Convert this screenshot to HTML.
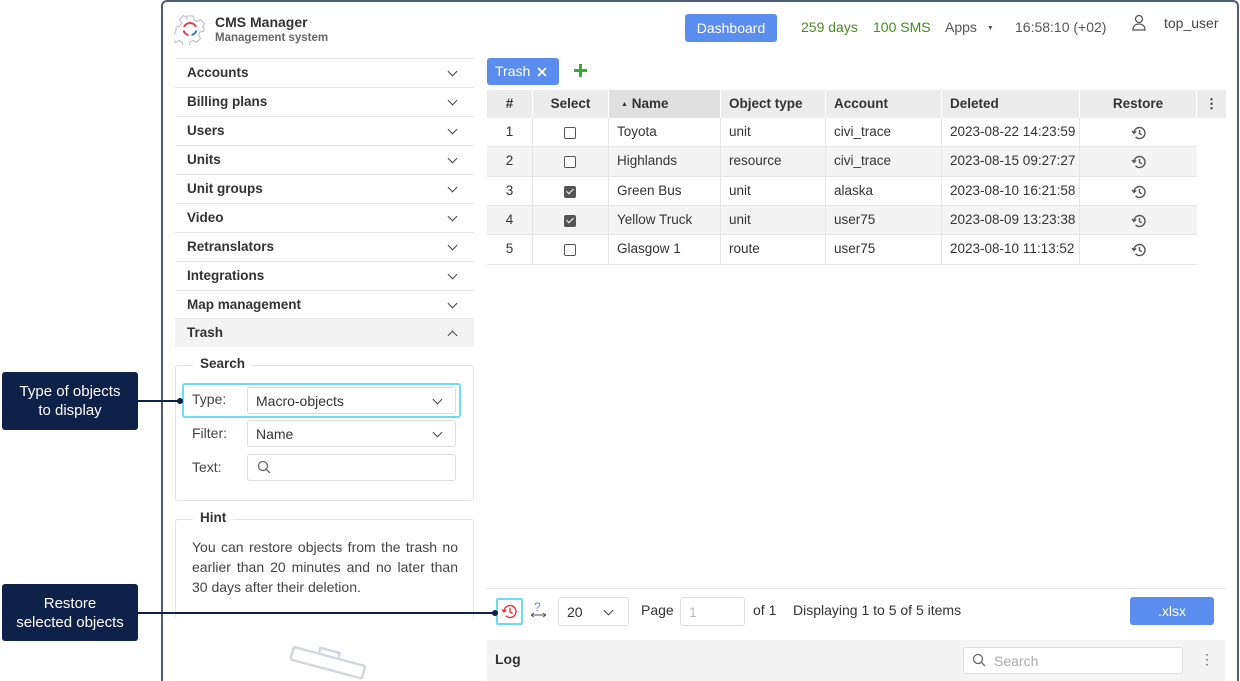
<!DOCTYPE html>
<html style="height:681px;overflow:hidden"><head><meta charset="utf-8"><style>
*{margin:0;padding:0;box-sizing:border-box}
body{width:1240px;height:681px;position:relative;overflow:hidden;background:#fff;font-family:"Liberation Sans",sans-serif;font-size:14px;color:#333}
.a{position:absolute;white-space:nowrap}
.frame{left:161px;top:0;width:1078px;height:681px;border:2px solid #4d5b73;border-bottom:none;border-radius:6px 6px 0 0}
.menu{left:175px;width:299px;height:29px;border-top:1px solid #e6e6e6;padding-left:12px;line-height:27px;font-weight:bold;font-size:13.5px;color:#333}
.chev{position:absolute;right:18px;top:9px;width:7px;height:7px;border-right:1.6px solid #444;border-bottom:1.6px solid #444;transform:rotate(45deg)}
.chevu{transform:rotate(-135deg);top:13px}
.fs{border:1px solid #e3e3e3;border-radius:3px}
.leg{background:#fff;padding:0 7px;font-weight:bold;font-size:13.5px}
.inp{border:1px solid #ddd;border-radius:3px;background:#fff}
.lbl{font-size:14px;color:#444}
.th{top:90px;height:28px;line-height:27px;background:#ececec;font-weight:bold;font-size:13.5px;border-right:1px solid #fff}
.cell{height:29px;line-height:28px;border-right:1px solid #e6e6e6;padding-left:8px;font-size:13.5px;white-space:nowrap;overflow:hidden}
.cb{width:12px;height:12px;border:1.5px solid #555;border-radius:2px;position:absolute;left:31px;top:9px}
.cbc{background:#555}
.cbc:after{content:"";position:absolute;left:3px;top:0px;width:3px;height:6px;border-right:1.5px solid #fff;border-bottom:1.5px solid #fff;transform:rotate(45deg)}
.callout{left:2px;width:136px;background:#0d2149;color:#fff;border-radius:3px;text-align:center;font-size:15px;line-height:19px}
.rs{display:block;margin:7px auto 0}
</style></head><body>
<div class="a frame"></div>

<svg class="a" style="left:174px;top:13px" width="32" height="32" viewBox="0 0 32 32">
<path d="M13 3h6l1 4 3 1.5 3.5-2 4 4-2 3.5L30 14v4l-4 1-1.5 3 2 3.5-4 4-3.5-2-3 1.5-1 4h-6l-1-4-3-1.5-3.5 2-4-4 2-3.5L2 18v-4l4-1 1.5-3-2-3.5 4-4 3.5 2L13 7z" fill="none" stroke="#bbb" stroke-width="1"/>
<path d="M10 14a6.5 6.5 0 0 1 12 0" fill="none" stroke="#e03c4b" stroke-width="2"/>
<path d="M22.5 17.5a6.5 6.5 0 0 1-5 4.5" fill="none" stroke="#3b6fd8" stroke-width="2"/>
<path d="M14.5 22a6.5 6.5 0 0 1-5-4.5" fill="none" stroke="#e03c4b" stroke-width="2"/>
</svg>
<div class="a" style="left:215px;top:14px;font-weight:bold;font-size:14px;color:#333">CMS Manager</div>
<div class="a" style="left:215px;top:32px;font-weight:bold;font-size:11.5px;color:#666">Management system</div>

<div class="a" style="left:685px;top:14px;width:92px;height:28px;background:#5b8def;border-radius:3px;color:#fff;text-align:center;line-height:28px;font-size:14px">Dashboard</div>
<div class="a" style="left:801px;top:19px;color:#4a8a2a;font-size:14px">259 days</div>
<div class="a" style="left:873px;top:19px;color:#3f8f1f;font-size:14px">100 SMS</div>
<div class="a" style="left:945px;top:19px;color:#555;font-size:14px">Apps <span style="font-size:7px;margin-left:6px;vertical-align:2px">▼</span></div>
<div class="a" style="left:1015px;top:19px;color:#555;font-size:14px">16:58:10 (+02)</div>
<svg class="a" style="left:1131px;top:14px" width="16" height="18" viewBox="0 0 16 18"><circle cx="8" cy="5" r="3.5" fill="none" stroke="#555" stroke-width="1.3"/><path d="M2 16c0-4 2.5-6 6-6s6 2 6 6z" fill="none" stroke="#555" stroke-width="1.3"/></svg>
<div class="a" style="left:1164px;top:15px;color:#444;font-size:14px">top_user</div>

<div class="a menu" style="top:58px">Accounts<i class="chev"></i></div>
<div class="a menu" style="top:87px">Billing plans<i class="chev"></i></div>
<div class="a menu" style="top:116px">Users<i class="chev"></i></div>
<div class="a menu" style="top:145px">Units<i class="chev"></i></div>
<div class="a menu" style="top:174px">Unit groups<i class="chev"></i></div>
<div class="a menu" style="top:203px">Video<i class="chev"></i></div>
<div class="a menu" style="top:232px">Retranslators<i class="chev"></i></div>
<div class="a menu" style="top:261px">Integrations<i class="chev"></i></div>
<div class="a menu" style="top:290px">Map management<i class="chev"></i></div>
<div class="a menu" style="top:318px;background:#f3f3f3">Trash<i class="chev chevu"></i></div>

<div class="a fs" style="left:175px;top:365px;width:299px;height:136px"></div>
<div class="a leg" style="left:193px;top:356px">Search</div>
<div class="a" style="left:182px;top:383px;width:279px;height:35px;border:2px solid #6fdcec;border-radius:3px"></div>
<div class="a lbl" style="left:192px;top:391px">Type:</div>
<div class="a inp" style="left:247px;top:387px;width:209px;height:27px;padding:5px 8px">Macro-objects<i class="chev" style="right:14px;top:8px"></i></div>
<div class="a lbl" style="left:192px;top:425px">Filter:</div>
<div class="a inp" style="left:247px;top:420px;width:209px;height:27px;padding:5px 8px">Name<i class="chev" style="right:14px;top:8px"></i></div>
<div class="a lbl" style="left:192px;top:459px">Text:</div>
<div class="a inp" style="left:247px;top:454px;width:209px;height:27px"></div>
<svg class="a" style="left:257px;top:460px" width="14" height="14" viewBox="0 0 14 14"><circle cx="6" cy="6" r="4.5" fill="none" stroke="#666" stroke-width="1.3"/><path d="M9.3 9.3L13 13" stroke="#666" stroke-width="1.3"/></svg>

<div class="a fs" style="left:175px;top:519px;width:299px;height:100px;border-bottom:none"></div>
<div class="a leg" style="left:193px;top:510px">Hint</div>
<div class="a" style="left:192px;top:537px;width:266px;font-size:14px;line-height:20px;color:#444;text-align:justify;white-space:normal">You can restore objects from the trash no earlier than 20 minutes and no later than 30 days after their deletion.</div>

<svg class="a" style="left:285px;top:642px" width="85" height="40" viewBox="0 0 85 40"><g transform="rotate(15 42 20)" fill="none" stroke="#d3d6df" stroke-width="2.5"><rect x="6" y="14" width="74" height="13" rx="2"/><path d="M32 14v-6h20v6"/></g></svg>

<div class="a" style="left:487px;top:58px;width:72px;height:27px;background:#5b8def;border-radius:3px;color:#fff;padding:5px 0 0 8px;font-size:14px">Trash</div>
<svg class="a" style="left:537px;top:67px" width="10" height="10" viewBox="0 0 10 10"><path d="M1 1l8 8M9 1l-8 8" stroke="#fff" stroke-width="1.8"/></svg>
<svg class="a" style="left:573px;top:63px" width="15" height="15" viewBox="0 0 15 15"><path d="M7.5 1v13M1 7.5h13" stroke="#3aaa35" stroke-width="3"/></svg>

<div class="a th" style="left:487px;width:46px;text-align:center">#</div>
<div class="a th" style="left:533px;width:76px;text-align:center">Select</div>
<div class="a th" style="left:609px;width:112px;background:#e0e0e0;padding-left:12px"><span style="font-size:7px;vertical-align:2px">▲</span> Name</div>
<div class="a th" style="left:721px;width:105px;padding-left:8px">Object type</div>
<div class="a th" style="left:826px;width:116px;padding-left:8px">Account</div>
<div class="a th" style="left:942px;width:138px;padding-left:8px">Deleted</div>
<div class="a th" style="left:1080px;width:117px;text-align:center">Restore</div>
<div class="a th" style="left:1197px;width:29px;text-align:center;border:none">⋮</div>

<svg width="0" height="0" style="position:absolute"><defs><g id="r"><path d="M3 8a5.5 5.5 0 1 1 1.6 3.9" fill="none" stroke="#555" stroke-width="1.4"/><path d="M1 6l2 2.4 2.2-2" fill="none" stroke="#555" stroke-width="1.4"/><path d="M8.5 5v3.5l2.3 1.3" fill="none" stroke="#555" stroke-width="1.4"/></g></defs></svg>

<div class="a" style="left:487px;top:118px;width:710px">
<div style="position:relative;height:29px;border-bottom:1px solid #e6e6e6;display:flex"><div class="cell" style="width:46px;padding:0;text-align:center">1</div><div class="cell" style="width:76px;position:relative"><i class="cb"></i></div><div class="cell" style="width:112px">Toyota</div><div class="cell" style="width:105px">unit</div><div class="cell" style="width:116px">civi_trace</div><div class="cell" style="width:138px">2023-08-22 14:23:59</div><div class="cell" style="width:117px;padding:0;border:none"><svg class="rs" width="16" height="15"><use href="#r"/></svg></div></div>
<div style="position:relative;height:30px;background:#f4f4f4;border-bottom:1px solid #e6e6e6;display:flex"><div class="cell" style="width:46px;padding:0;text-align:center">2</div><div class="cell" style="width:76px;position:relative"><i class="cb" style="background:#fff"></i></div><div class="cell" style="width:112px">Highlands</div><div class="cell" style="width:105px">resource</div><div class="cell" style="width:116px">civi_trace</div><div class="cell" style="width:138px">2023-08-15 09:27:27</div><div class="cell" style="width:117px;padding:0;border:none"><svg class="rs" width="16" height="15"><use href="#r"/></svg></div></div>
<div style="position:relative;height:29px;border-bottom:1px solid #e6e6e6;display:flex"><div class="cell" style="width:46px;padding:0;text-align:center">3</div><div class="cell" style="width:76px;position:relative"><i class="cb cbc"></i></div><div class="cell" style="width:112px">Green Bus</div><div class="cell" style="width:105px">unit</div><div class="cell" style="width:116px">alaska</div><div class="cell" style="width:138px">2023-08-10 16:21:58</div><div class="cell" style="width:117px;padding:0;border:none"><svg class="rs" width="16" height="15"><use href="#r"/></svg></div></div>
<div style="position:relative;height:29px;background:#f4f4f4;border-bottom:1px solid #e6e6e6;display:flex"><div class="cell" style="width:46px;padding:0;text-align:center">4</div><div class="cell" style="width:76px;position:relative"><i class="cb cbc"></i></div><div class="cell" style="width:112px">Yellow Truck</div><div class="cell" style="width:105px">unit</div><div class="cell" style="width:116px">user75</div><div class="cell" style="width:138px">2023-08-09 13:23:38</div><div class="cell" style="width:117px;padding:0;border:none"><svg class="rs" width="16" height="15"><use href="#r"/></svg></div></div>
<div style="position:relative;height:30px;border-bottom:1px solid #e6e6e6;display:flex"><div class="cell" style="width:46px;padding:0;text-align:center">5</div><div class="cell" style="width:76px;position:relative"><i class="cb"></i></div><div class="cell" style="width:112px">Glasgow 1</div><div class="cell" style="width:105px">route</div><div class="cell" style="width:116px">user75</div><div class="cell" style="width:138px">2023-08-10 11:13:52</div><div class="cell" style="width:117px;padding:0;border:none"><svg class="rs" width="16" height="15"><use href="#r"/></svg></div></div>
</div>

<div class="a" style="left:486px;top:588px;width:740px;border-top:1px solid #e6e6e6"></div>
<div class="a" style="left:496px;top:598px;width:27px;height:27px;border:2px solid #6fdcec;border-radius:2px"></div>
<svg class="a" style="left:501px;top:603px" width="17" height="17" viewBox="0 0 17 17"><path d="M3 8.5a6 6 0 1 1 1.8 4.3" fill="none" stroke="#e53935" stroke-width="1.4"/><path d="M1 6.5l2 2.5 2.3-2.2" fill="none" stroke="#e53935" stroke-width="1.4"/><path d="M9 5v4l2.5 1.5" fill="none" stroke="#e53935" stroke-width="1.4"/></svg>
<div class="a" style="left:534px;top:600px;font-size:12px;color:#5b8def">?</div>
<svg class="a" style="left:530px;top:612px" width="17" height="6" viewBox="0 0 17 6"><path d="M1 3h15M1 3l3-2M1 3l3 2M16 3l-3-2M16 3l-3 2" stroke="#555" stroke-width="1" fill="none"/></svg>
<div class="a inp" style="left:558px;top:597px;width:71px;height:29px;padding:6px 8px">20<i class="chev" style="right:16px;top:9px"></i></div>
<div class="a" style="left:641px;top:602px">Page</div>
<div class="a inp" style="left:680px;top:597px;width:65px;height:29px;padding:6px 8px;color:#bbb">1</div>
<div class="a" style="left:753px;top:602px">of 1</div>
<div class="a" style="left:793px;top:602px">Displaying 1 to 5 of 5 items</div>
<div class="a" style="left:1130px;top:597px;width:84px;height:28px;background:#5b8def;border-radius:3px;color:#fff;text-align:center;line-height:28px">.xlsx</div>

<div class="a" style="left:486px;top:640px;width:740px;height:41px;background:#f4f4f4"></div>
<div class="a" style="left:495px;top:651px;font-weight:bold">Log</div>
<div class="a inp" style="left:963px;top:647px;width:220px;height:27px;padding:5px 0 0 30px;color:#aaa">Search</div>
<svg class="a" style="left:972px;top:653px" width="14" height="14" viewBox="0 0 14 14"><circle cx="6" cy="6" r="4.5" fill="none" stroke="#666" stroke-width="1.3"/><path d="M9.3 9.3L13 13" stroke="#666" stroke-width="1.3"/></svg>
<div class="a" style="left:1200px;top:651px;color:#666">⋮</div>

<div class="a callout" style="top:372px;height:58px;padding-top:10px">Type of objects<br>to display</div>
<div class="a" style="left:138px;top:400px;width:44px;height:2px;background:#0d2149"></div>
<div class="a" style="left:177px;top:398px;width:6px;height:6px;border-radius:50%;background:#0d2149"></div>
<div class="a callout" style="top:584px;height:57px;padding-top:10px">Restore<br>selected objects</div>
<div class="a" style="left:138px;top:612px;width:358px;height:2px;background:#0d2149"></div>
<div class="a" style="left:492px;top:610px;width:6px;height:6px;border-radius:50%;background:#0d2149"></div>
</body></html>
